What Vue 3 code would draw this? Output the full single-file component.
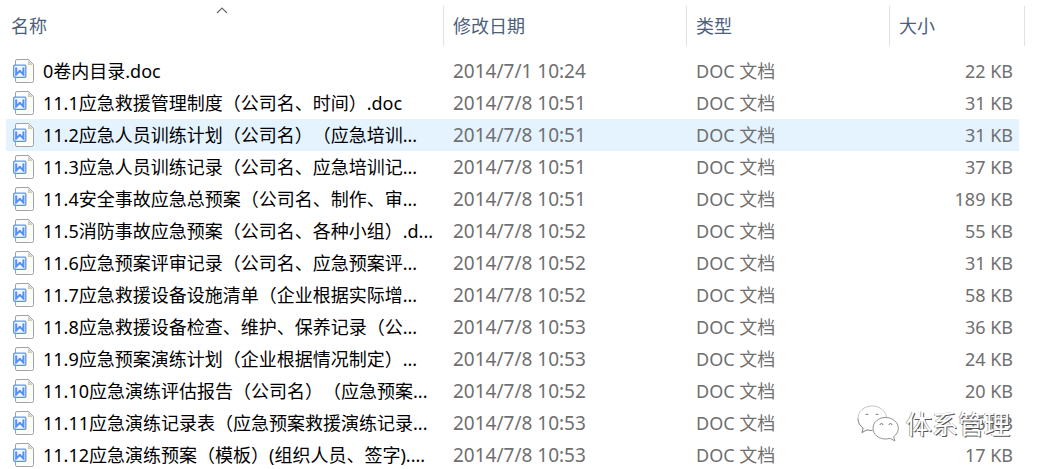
<script setup>
import { ref } from 'vue'

const ascending = ref(true)
const columns = ['名称', '修改日期', '类型', '大小']
const files = ref([
  ['0卷内目录.doc', '2014/7/1 10:24', '22 KB'],
  ['11.1应急救援管理制度（公司名、时间）.doc', '2014/7/8 10:51', '31 KB'],
  ['11.2应急人员训练计划（公司名）（应急培训...', '2014/7/8 10:51', '31 KB'],
  ['11.3应急人员训练记录（公司名、应急培训记...', '2014/7/8 10:51', '37 KB'],
  ['11.4安全事故应急总预案（公司名、制作、审...', '2014/7/8 10:51', '189 KB'],
  ['11.5消防事故应急预案（公司名、各种小组）.d...', '2014/7/8 10:52', '55 KB'],
  ['11.6应急预案评审记录（公司名、应急预案评...', '2014/7/8 10:52', '31 KB'],
  ['11.7应急救援设备设施清单（企业根据实际增...', '2014/7/8 10:52', '58 KB'],
  ['11.8应急救援设备检查、维护、保养记录（公...', '2014/7/8 10:53', '36 KB'],
  ['11.9应急预案演练计划（企业根据情况制定）...', '2014/7/8 10:53', '24 KB'],
  ['11.10应急演练评估报告（公司名）（应急预案...', '2014/7/8 10:52', '20 KB'],
  ['11.11应急演练记录表（应急预案救援演练记录...', '2014/7/8 10:53', '36 KB'],
  ['11.12应急演练预案（模板）(组织人员、签字)....', '2014/7/8 10:53', '17 KB'],
].map(([name, date, size]) => ({ name, date, size })))
const active = ref(2)

function reverse() {
  ascending.value = !ascending.value
  files.value.reverse()
}
</script>

<template>
  <main class="explorer">
    <table class="files">
      <colgroup>
        <col class="col-name" />
        <col class="col-date" />
        <col class="col-type" />
        <col class="col-size" />
      </colgroup>
      <thead>
        <tr>
          <th v-for="(column, i) in columns" :key="column" scope="col">
            <button type="button" class="heading" @click="reverse">{{ column }}</button>
            <svg v-if="i === 0" class="caret" :class="{ down: !ascending }" width="12" height="7" viewBox="0 0 12 7" aria-hidden="true">
              <path d="M1 6 6 1l5 5" fill="none" stroke="#6b6b6b" stroke-width="1.2" />
            </svg>
          </th>
        </tr>
      </thead>
      <tbody>
        <tr v-for="(file, i) in files" :key="file.name" :class="{ active: i === active }" @mouseenter="active = i">
          <td>
            <div class="name">
              <svg class="icon" width="22" height="26" viewBox="0 0 22 26" aria-hidden="true">
                <path d="M4 1.500h11.500l5 5v16a2 2 0 0 1-2 2H4a1.500 1.500 0 0 1-1.500-1.500V3A1.500 1.500 0 0 1 4 1.500z" fill="#fcfcfc" stroke="#a2a2a2" />
                <path d="M15 2v5h5z" fill="#cfcfcf" />
                <rect x=".7" y="7.200" width="12.100" height="12.100" rx="1" fill="#f1f6ff" stroke="#5f95ee" stroke-width="1.300" />
                <path d="M3.200 9.500v7L6.800 13l3.600 3.500v-7" fill="none" stroke="#5790ec" stroke-width="2" />
              </svg>
              <span>{{ file.name }}</span>
            </div>
          </td>
          <td class="date">{{ file.date }}</td>
          <td>DOC 文档</td>
          <td class="size">{{ file.size }}</td>
        </tr>
      </tbody>
    </table>
    <div class="watermark">
      <svg width="44" height="38" viewBox="0 0 44 38" aria-hidden="true">
        <g fill="#fff" stroke-width=".8">
          <path d="M15 1C7 1 1 6.500 1 13.500c0 4 2 7.300 5.200 9.600L5 27.500l5-2.700c1.600.5 3.300.7 5 .7 8 0 14.500-5.500 14.500-12.300S23 1 15 1z" stroke="#b5b5b5" />
          <path d="M1 13.500c0 4 2 7.300 5.200 9.600L5 27.500l5-2.700c1.600.5 3.300.7 5 .7" stroke="#707070" />
          <path d="M28.500 12.500c-7 0-12.500 4.700-12.500 10.800S21.500 34 28.500 34c1.500 0 3-.2 4.400-.6l5 2.400-1.300-4.100c2.900-2 4.700-5 4.700-8.400 0-6.100-5.800-10.800-12.800-10.800z" stroke="#777" />
        </g>
        <path d="M8.500 10a1.700 1.700 0 0 1 3 0M18.500 10a1.700 1.700 0 0 1 3 0M23 20a1.500 1.500 0 0 1 3 0M32 20a1.500 1.500 0 0 1 3 0" fill="none" stroke="#777" />
      </svg>
      <span>体系管理</span>
    </div>
  </main>
</template>

<style>
body {
  background: #fff;
}
</style>

<style scoped>
.explorer {
  position: relative;
  overflow: hidden;
  padding-right: 18px;
  font: 18px/32px "Noto Sans", "Noto Sans CJK SC", sans-serif;
  text-spacing-trim: space-all;
  color: #6f6f6f;
}
.files {
  width: 100%;
  table-layout: fixed;
  border-spacing: 0;
}
.col-date {
  width: 243px;
}
.col-type {
  width: 203px;
}
.col-size {
  width: 135px;
}
th {
  position: relative;
  height: 55px;
  padding: 6px 0 9px;
  box-sizing: border-box;
  font-weight: 400;
}
.heading {
  display: block;
  width: 100%;
  height: 40px;
  padding: 0 9px;
  border: 0;
  border-right: 1px solid #e2e2e2;
  background: none;
  font: inherit;
  line-height: 40px;
  text-align: left;
  color: #4c607a;
}
th:first-child .heading {
  padding-left: 11px;
}
.caret {
  position: absolute;
  top: 7px;
  left: calc(50% - 6px);
}
.down {
  transform: rotate(180deg);
}
td {
  height: 32px;
  padding: 0 9px;
  white-space: nowrap;
  background-clip: padding-box;
}
td:first-child {
  padding: 0 0 0 7px;
  border-left: 6px solid transparent;
}
td:last-child {
  padding-right: 6px;
  border-right: 6px solid transparent;
}
.active td {
  background-color: #e5f3ff;
}
.name {
  display: flex;
  align-items: center;
  gap: 8px;
  height: 32px;
  color: #000;
}
.date {
  font-size: 19px;
}
.size {
  text-align: right;
}
.watermark {
  position: absolute;
  right: 33px;
  bottom: 28px;
  display: flex;
  align-items: center;
  gap: 5px;
  font-size: 26px;
  line-height: 38px;
  color: #fff;
  text-shadow: 1px 1px 0 #555, -1px 0 0 #aaa;
  pointer-events: none;
}
</style>
